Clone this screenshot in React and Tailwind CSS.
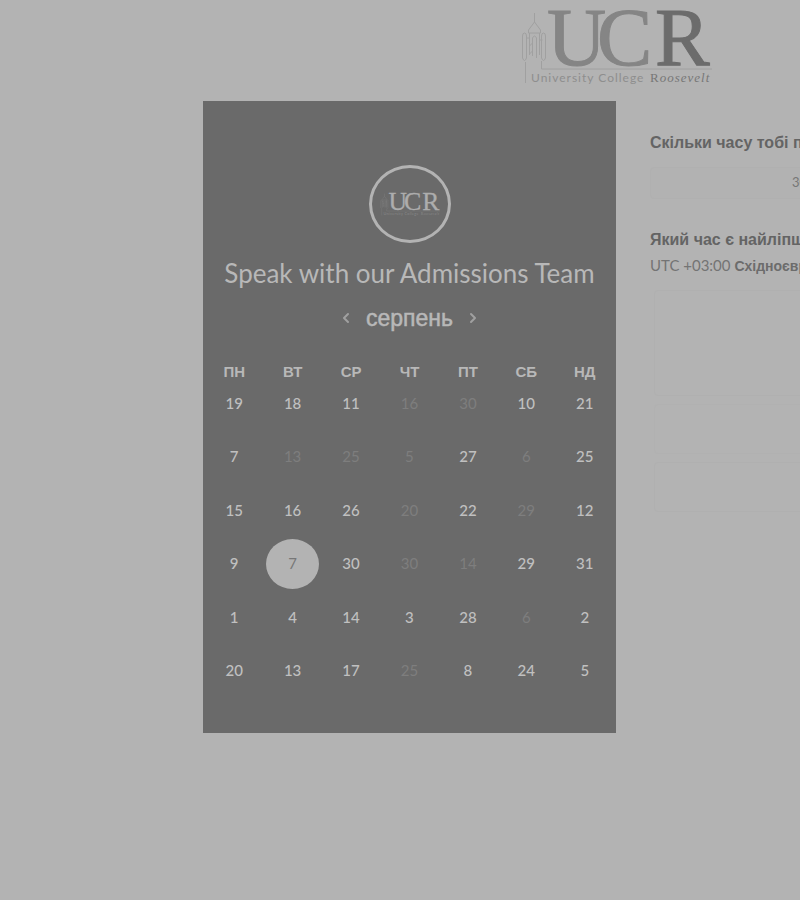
import { ChevronLeft, ChevronRight } from "lucide-react";

const weekdays = ["ПН", "ВТ", "СР", "ЧТ", "ПТ", "СБ", "НД"];

const weeks = [
  [[19, 1], [18, 1], [11, 1], [16, 0], [30, 0], [10, 1], [21, 1]],
  [[7, 1], [13, 0], [25, 0], [5, 0], [27, 1], [6, 0], [25, 1]],
  [[15, 1], [16, 1], [26, 1], [20, 0], [22, 1], [29, 0], [12, 1]],
  [[9, 1], [7, 2], [30, 1], [30, 0], [14, 0], [29, 1], [31, 1]],
  [[1, 1], [4, 1], [14, 1], [3, 1], [28, 1], [6, 0], [2, 1]],
  [[20, 1], [13, 1], [17, 1], [25, 0], [8, 1], [24, 1], [5, 1]],
];

const dayStyles = [
  "text-[#7e7e7e]",
  "text-[#c0c0c0] font-medium",
  "bg-[#b3b3b3] text-[#777777]",
];

function Logo({ className, light }) {
  const main = light ? "#adadad" : "#858585";
  const strong = light ? "#adadad" : "#6c6c6c";
  const line = light ? "#888888" : "#a0a0a0";
  return (
    <svg viewBox="-1 0 192 78" className={`overflow-visible ${className}`} role="img" aria-label="University College Roosevelt">
      <g fill="none" stroke={line} strokeWidth="1">
        <path d="M13.500 5v9M13.500 14l-6 8v3h12v-3zM8.500 25v22M18.500 25v22M1.500 28q0-3 2-3t2 3v22q-2 5-4 0zM20.500 28q0-3 2-3t2 3v22q-2 5-4 0zM11.500 48V30q2-4 4 0v20M5.500 30h3M18.500 32h3M8.500 38l3-3M8.500 46l3-3" />
        <path d="M4.500 54v21M20.500 53v8H191" />
      </g>
      <g fontFamily="'Liberation Serif', serif" fontSize="82" strokeWidth="1">
        <text x="26" y="57" fill={main} stroke={main}>U</text>
        <text x="76" y="57" fontSize="83" fill={main} stroke={main}>C</text>
        <text x="134" y="57" fill={strong} stroke={strong}>R</text>
      </g>
      <text x="10" y="74" fontFamily="Lato, sans-serif" fontSize="12" letterSpacing="1" fill={light ? "#888888" : "#8e8e8e"}>
        University College
      </text>
      <text x="129" y="74" fontFamily="'Liberation Serif', serif" fontSize="13" letterSpacing="1" fontStyle="italic" fill={light ? "#888888" : "#777777"}>
        <tspan fontStyle="normal">R</tspan>oosevelt
      </text>
    </svg>
  );
}

function Calendar() {
  return (
    <section className="flex w-1/2 flex-col items-center bg-[#6a6a6a] pt-16 pb-[34px] text-[#b8b8b8]">
      <div className="flex h-[78px] w-[82px] items-center justify-center rounded-[50%] border-3 border-[#b3b3b3]">
        <Logo light className="w-[60px]" />
      </div>
      <h1 className="mt-3 text-[26px] leading-9 whitespace-nowrap">Speak with our Admissions Team</h1>
      <div className="mt-[7px] flex items-center gap-3">
        <button type="button" aria-label="Попередній місяць" className="text-[#a0a0a0]">
          <ChevronLeft size={16} strokeWidth={3} />
        </button>
        <h2 className="font-['Liberation_Sans',sans-serif] text-[23px] leading-10 [-webkit-text-stroke:0.5px]">серпень</h2>
        <button type="button" aria-label="Наступний місяць" className="text-[#a0a0a0]">
          <ChevronRight size={16} strokeWidth={3} />
        </button>
      </div>
      <div className="mt-7 w-full px-0.5">
        <table className="h-[333px] w-full table-fixed border-collapse">
          <thead>
            <tr className="h-3">
              {weekdays.map((d) => (
                <th key={d} scope="col" className="p-0 font-['Liberation_Sans',sans-serif] text-[15px] leading-3">{d}</th>
              ))}
            </tr>
          </thead>
          <tbody>
            {weeks.map((week, w) => (
              <tr key={w}>
                {week.map(([day, state], i) => (
                  <td key={i} className="p-0 text-center align-top">
                    <button
                      type="button"
                      disabled={state === 0}
                      aria-pressed={state === 2}
                      className={`h-[50px] w-[53px] rounded-[50%] text-[15px] ${dayStyles[state]}`}
                    >
                      {day}
                    </button>
                  </td>
                ))}
              </tr>
            ))}
          </tbody>
        </table>
      </div>
    </section>
  );
}

function Options() {
  return (
    <section className="w-1/2 px-[34px] pt-[30px] whitespace-nowrap text-[#646464]">
      <h2 className="font-['Liberation_Sans',sans-serif] text-base leading-6 font-bold">Скільки часу тобі потрібно?</h2>
      <button type="button" className="mt-3 h-8 w-full rounded-sm border border-[#b0b0b0] bg-[#b2b2b2] text-[13px] text-[#777777]">
        30 хвилин
      </button>
      <h2 className="mt-[29px] font-['Liberation_Sans',sans-serif] text-base leading-6 font-bold">Який час є найліпшим?</h2>
      <button type="button" className="block h-[26px] text-[15px] text-[#747474]">
        UTC +03:00{" "}
        <span className="font-['Liberation_Sans',sans-serif] text-sm font-bold text-[#6c6c6c]">Східноєвропейський час</span>
      </button>
      <div className="mt-3 flex flex-col gap-2 pl-1">
        <div className="h-[106px] rounded-sm border border-[#b0b0b0]" />
        <div className="h-[50px] rounded-sm border border-[#b1b1b1]" />
        <div className="h-[50px] rounded-sm border border-[#b0b0b0]" />
      </div>
    </section>
  );
}

export default function App() {
  return (
    <div className="min-h-screen overflow-hidden bg-[#b3b3b3] font-[Lato,sans-serif]">
      <div className="flex min-w-[1232px] flex-col items-center">
        <header className="pt-2 pb-[15px]">
          <Logo className="w-48" />
        </header>
        <main className="flex w-[826px]">
          <Calendar />
          <Options />
        </main>
      </div>
    </div>
  );
}
